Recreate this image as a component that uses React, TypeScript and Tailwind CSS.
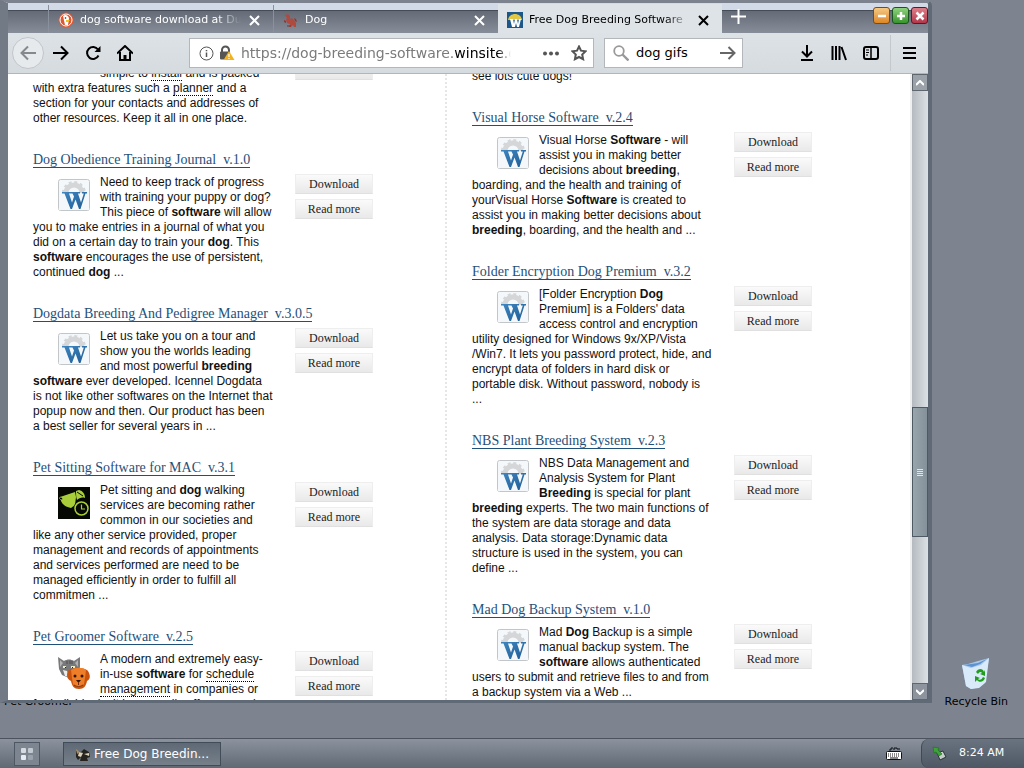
import type { ReactNode } from "react"

type Entry = {
  title: string
  icon: "win" | "pet" | "groom" | "none"
  body: ReactNode
}

const leftEntries: Entry[] = [
  {
    title: "",
    icon: "none",
    body: (
      <>
        <br />
        <br />
        simple to <Term>install</Term> and is packed with extra features such a <Term>planner</Term> and a section for
        your contacts and addresses of other resources. Keep it all in one place.
      </>
    ),
  },
  {
    title: "Dog Obedience Training Journal  v.1.0",
    icon: "win",
    body: (
      <>
        Need to keep track of progress with training your puppy or dog? This piece of <b>software</b> will allow you to
        make entries in a journal of what you did on a certain day to train your <b>dog</b>. This <b>software</b>{" "}
        encourages the use of persistent, continued <b>dog</b> ...
      </>
    ),
  },
  {
    title: "Dogdata Breeding And Pedigree Manager  v.3.0.5",
    icon: "win",
    body: (
      <>
        Let us take you on a tour and show you the worlds leading and most powerful <b>breeding software</b> ever
        developed. Icennel Dogdata is not like other softwares on the Internet that popup now and then. Our product has
        been a best seller for several years in ...
      </>
    ),
  },
  {
    title: "Pet Sitting Software for MAC  v.3.1",
    icon: "pet",
    body: (
      <>
        Pet sitting and <b>dog</b> walking services are becoming rather common in our societies and like any other
        service provided, proper management and records of appointments and services performed are need to be managed
        efficiently in order to fulfill all commitmen ...
      </>
    ),
  },
  {
    title: "Pet Groomer Software  v.2.5",
    icon: "groom",
    body: (
      <>
        A modern and extremely easy-in-use <b>software</b> for <Term>schedule management</Term> in companies or
        <br />
        for individuals, it is generally offers a number of
      </>
    ),
  },
]

const rightEntries: Entry[] = [
  {
    title: "",
    icon: "none",
    body: (
      <>
        <br />
        <br />
        <br />
        see lots cute dogs!
      </>
    ),
  },
  {
    title: "Visual Horse Software  v.2.4",
    icon: "win",
    body: (
      <>
        Visual Horse <b>Software</b> - will assist you in making better decisions about <b>breeding</b>, boarding, and
        the health and training of yourVisual Horse <b>Software</b> is created to assist you in making better decisions
        about <b>breeding</b>, boarding, and the health and ...
      </>
    ),
  },
  {
    title: "Folder Encryption Dog Premium  v.3.2",
    icon: "win",
    body: (
      <>
        [Folder Encryption <b>Dog</b> Premium] is a Folders' data access control and encryption utility designed for
        Windows 9x/XP/Vista
        <br />
        /Win7. It lets you password protect, hide, and encrypt data of folders in hard disk or portable disk. Without
        password, nobody is
        <br />
        ...
      </>
    ),
  },
  {
    title: "NBS Plant Breeding System  v.2.3",
    icon: "win",
    body: (
      <>
        NBS Data Management and Analysis System for Plant <b>Breeding</b> is special for plant <b>breeding</b> experts.
        The two main functions of the system are data storage and data analysis. Data storage:Dynamic data structure is
        used in the system, you can define ...
      </>
    ),
  },
  {
    title: "Mad Dog Backup System  v.1.0",
    icon: "win",
    body: (
      <>
        Mad <b>Dog</b> Backup is a simple manual backup system. The <b>software</b> allows authenticated users to submit
        and retrieve files to and from a backup system via a Web ...
      </>
    ),
  },
]

function Term({ children }: { children: ReactNode }) {
  return <span className="border-b border-dotted border-black">{children}</span>
}

function WinIcon() {
  return (
    <svg width="32" height="32" viewBox="0 0 32 32">
      <defs>
        <linearGradient id="w" x1="0" y1="0" x2="1" y2="1">
          <stop offset="0" stopColor="#3f86c0" />
          <stop offset="1" stopColor="#1f5c94" />
        </linearGradient>
      </defs>
      <rect x="0.5" y="0.5" width="31" height="31" rx="2" fill="#f5f8fa" stroke="#c3c6c9" />
      <circle cx="16" cy="14" r="8" fill="none" stroke="#d4d6d8" strokeWidth="5" />
      <circle cx="16" cy="14" r="11" fill="none" stroke="#d4d6d8" strokeWidth="2" strokeDasharray="3 2.76" />
      <rect x="1" y="14" width="30" height="17" fill="#f5f8fa" />
      <path
        d="M4 13h9v1.500h-2l3 9 2-6-1.500-3h-2V13H22v1.500h-2l3 9 2.800-9H24V13h5v1.500h-1.500L22.500 30h-1.500l-3.500-9.500L14 30h-1.500L6.500 14.500H4z"
        fill="url(#w)"
      />
    </svg>
  )
}

function PetIcon() {
  return (
    <svg width="32" height="32" viewBox="0 0 32 32">
      <rect width="32" height="32" fill="#050803" />
      <path d="M2 10 11 7l6-2 1 5-1 8-4 3c-5-1-8-3-10-7z" fill="#a8cf3a" />
      <path d="m18 4 3-1c4 1 6 4 6 8-3-1-6 0-8 2-1-3-1-6-1-9z" fill="#a8cf3a" />
      <path d="m19 5 6 4" stroke="#050803" fill="none" />
      <path d="m1 11 2-1 2 2-2 1z" fill="#050803" stroke="#a8cf3a" strokeWidth="0.600" />
      <circle cx="23.500" cy="21.500" r="8" fill="#050803" />
      <circle cx="23.500" cy="21.500" r="6.500" fill="none" stroke="#a8cf3a" strokeWidth="1.500" />
      <path d="M23.500 17.500v4.500H27" fill="none" stroke="#a8cf3a" strokeWidth="1.200" />
    </svg>
  )
}

function GroomIcon() {
  return (
    <svg width="32" height="34" viewBox="0 0 32 34">
      <path d="m0 1 6 4c3-2 7-2 10 0l6-4v10l-2 8-9 3-7-3-3-6z" fill="#77797b" />
      <path d="m2 4 3 3-3 4zM20 4l-3 3 3 4z" fill="#b5b0b1" />
      <path d="m5 14 4 1 3 6-5-1z" fill="#ececea" />
      <path d="M9 5v3M12 4.500V8M14 5v3" stroke="#4d4f52" />
      <path d="M5 11h3M13 11h4" stroke="#e9edc8" strokeWidth="2" />
      <path d="M7 11.500h1M14 11.500h1" stroke="#222" />
      <path d="M10 15c3-4 17-4 20 0 3 5 2 9-1 10-1 5-3 8-8 8s-7-3-8-8c-4-2-5-6-3-10z" fill="#c9530d" />
      <path d="M13 14c4-3 12-3 15 0l-1 8-1 6c-3 4-8 4-11 0l-1-6z" fill="#ee7f28" />
      <circle cx="17" cy="20" r="1.500" fill="#301406" />
      <circle cx="24" cy="20" r="1.500" fill="#301406" />
      <path d="M18 24h5l-2.500 3z" fill="#301406" />
      <path d="M20.500 26v3M16 29c3 2 6 2 9 0" stroke="#7a2c08" fill="none" />
    </svg>
  )
}

function PageButton({ children }: { children: ReactNode }) {
  return (
    <button className="h-5 w-[78px] border border-[#eeeeee] border-b-[#e0e0e0] bg-linear-to-b from-[#fafafa] to-[#e9e9e9] font-['Liberation_Serif',serif] text-[12px] leading-[18px] text-[#222]">
      {children}
    </button>
  )
}

function Listing({ title, icon, body }: Entry) {
  return (
    <article className="mb-[19px]">
      <h2 className="h-5 text-[14px] leading-5 whitespace-pre text-[#1f5079]">
        {title && (
          <a href="#" className="inline-block border-b border-[#1f5079] font-['Liberation_Serif',serif] leading-[15px]">
            {title}
          </a>
        )}
      </h2>
      <div className="flex gap-[22px] pt-[5px]">
        <p className="w-60 pt-px pb-1 text-[12px] leading-[15px]">
          <span className="float-left block h-[45px] w-[67px] pt-1 pl-[25px]">
            {icon === "win" && <WinIcon />}
            {icon === "pet" && <PetIcon />}
            {icon === "groom" && <GroomIcon />}
          </span>
          {body}
        </p>
        <div className="flex flex-col gap-[5px]">
          <PageButton>Download</PageButton>
          <PageButton>Read more</PageButton>
        </div>
      </div>
    </article>
  )
}

function Cross() {
  return (
    <svg width="11" height="11" viewBox="0 0 11 11" fill="none" stroke="currentColor" strokeWidth="2">
      <path d="m1 1 9 9M10 1 1 10" />
    </svg>
  )
}

function DuckIcon() {
  return (
    <svg width="16" height="16" viewBox="0 0 16 16">
      <circle cx="8" cy="8" r="7.500" fill="#de5833" />
      <circle cx="8" cy="8" r="6" fill="none" stroke="#fff" />
      <path d="M5 4c2-2 5-1 6 2l-1 7H7z" fill="#fff" />
      <path d="M8 8h4l-2 2H8z" fill="#f7c31b" />
      <circle cx="7.500" cy="6" r="0.800" fill="#223" />
    </svg>
  )
}

function DogIcon() {
  return (
    <svg width="16" height="16" viewBox="0 0 16 16">
      <path d="m2 3 3-1 2 2v3l2-1 3 3 1 2v4h-2l-1-2-2 2H6l1-3-3-1-1-3 1-2z" fill="#b04a3f" />
      <path d="m11 6 2 1 1 3-2-1zM1 8l2 1v2l-2-1z" fill="#8c3a33" />
      <path d="M4 14h4" stroke="#7b3530" />
    </svg>
  )
}

function SiteIcon() {
  return (
    <svg width="16" height="16" viewBox="0 0 16 16">
      <rect width="16" height="16" fill="#1d5689" />
      <path d="M1 8c1-8 13-8 14 0z" fill="#e1c743" />
      <path d="M3 7h3l1 5 1-5h2l1 5 1-5h2l-2 8h-2l-1-4-1 4H5z" fill="#fff" />
    </svg>
  )
}

function Tab({ icon, label, active }: { icon: ReactNode; label: string; active?: boolean }) {
  return (
    <div
      className={
        active
          ? "-mt-[7px] flex w-56 items-center bg-[#dee3e8] px-[9px] pt-[3px] text-black"
          : "-mt-[6px] flex w-[225px] items-center border-l border-[#8b919c] px-[9px] pt-[2px] text-white"
      }
    >
      {icon}
      <a href="#" className="ml-[6px] flex-1 overflow-hidden mask-r-from-85% text-[11px] leading-5 whitespace-nowrap">
        {label}
      </a>
      <button aria-label="Close tab" className="ml-2 pr-1">
        <Cross />
      </button>
    </div>
  )
}

function Tabs() {
  return (
    <div className="bg-[#d3dae7] pt-[7px]">
      <div className="flex h-[23px] border-t border-[#454c57] bg-linear-to-b from-[#646b76] to-[#878e99]">
        <div className="flex flex-1 pl-10">
          <Tab icon={<DuckIcon />} label="dog software download at DuckDuckGo" />
          <Tab icon={<DogIcon />} label="Dog" />
          <Tab active icon={<SiteIcon />} label="Free Dog Breeding Software" />
          <button aria-label="New tab" className="-mt-3 ml-2 px-px text-white">
            <svg width="15" height="15" viewBox="0 0 15 15" stroke="currentColor" strokeWidth="2">
              <path d="M7.500 0v15M0 7.500h15" />
            </svg>
          </button>
        </div>
        <div className="-mt-1 flex items-start gap-[2px]">
          <WindowButton label="Minimize" color="bg-linear-to-b from-[#f6c982] to-[#dc8620] border-[#7b4a12]">
            <path d="M4 8h8" />
          </WindowButton>
          <WindowButton label="Maximize" color="bg-linear-to-b from-[#8fd27c] to-[#36942c] border-[#1c5220]">
            <path d="M8 4v8M4 8h8" />
          </WindowButton>
          <WindowButton label="Close" color="bg-linear-to-b from-[#dc7f8b] to-[#b2364a] border-[#641525]">
            <path d="m4.500 4.500 7 7M11.500 4.500l-7 7" />
          </WindowButton>
        </div>
      </div>
    </div>
  )
}

function WindowButton({ label, color, children }: { label: string; color: string; children: ReactNode }) {
  return (
    <button
      aria-label={label}
      className={`flex size-[17px] items-center justify-center rounded-[3px] border ${color}`}
    >
      <svg width="16" height="16" viewBox="0 0 16 16" className="shrink-0 stroke-white" fill="none" strokeWidth="2.500">
        {children}
      </svg>
    </button>
  )
}

function Toolbar() {
  return (
    <div className="flex h-[41px] items-center border-b border-[#b1b6bb] bg-linear-to-b from-[#dde2e7] to-[#d6dbe0]">
      <button
        aria-label="Back"
        className="ml-1 flex size-8 items-center justify-center rounded-full border border-[#c2c6ca] bg-[#e7eaed] text-[#85888c]"
      >
        <svg width="16" height="16" viewBox="0 0 16 16" fill="none" stroke="currentColor" strokeWidth="2">
          <path d="M16 8H1.500M8 1.500 1.500 8 8 14.500" />
        </svg>
      </button>
      <button aria-label="Forward" className="ml-[9px]">
        <svg width="16" height="16" viewBox="0 0 16 16" fill="none" stroke="#000" strokeWidth="2">
          <path d="M0 8h14.500M8 1.500 14.500 8 8 14.500" />
        </svg>
      </button>
      <button aria-label="Reload" className="ml-4">
        <svg width="16" height="16" viewBox="0 0 16 16" fill="none" stroke="#000" strokeWidth="2">
          <path d="M13.500 10.500a6 6 0 1 1-.5-6" />
          <path d="M15.500 1v6h-6z" fill="#000" stroke="none" />
        </svg>
      </button>
      <button aria-label="Home" className="ml-4">
        <svg width="16" height="16" viewBox="0 0 16 16" fill="none" stroke="#000" strokeWidth="2">
          <path d="M0 8.500 8 1l8 7.500M3 7v8h10V7" />
          <path d="M6.500 15v-5h3v5z" fill="#000" stroke="none" />
        </svg>
      </button>

      <div className="mr-[10px] ml-14 flex h-[30px] min-w-0 flex-1 items-center border border-[#b3b7bc] bg-white px-[9px]">
        <svg width="15" height="15" viewBox="0 0 15 15" fill="none" stroke="#555" className="shrink-0">
          <circle cx="7.500" cy="7.500" r="6.500" />
          <path d="M7.500 6.500V11M7.500 4v1.300" strokeWidth="1.500" />
        </svg>
        <svg width="16" height="16" viewBox="0 0 16 16" className="ml-[5px] shrink-0">
          <path d="M3 7V5a3 3 0 0 1 7 0v2" fill="none" stroke="#555" strokeWidth="2" />
          <rect x="1" y="6.500" width="10" height="8" rx="1" fill="#555" />
          <path d="m10 6 5.500 9h-11z" fill="#f3b21b" />
          <path d="M10 9v3M10 13v1" stroke="#fff" strokeWidth="1.200" />
        </svg>
        <div className="ml-[6px] min-w-0 flex-1 overflow-hidden mask-r-from-95% text-[14px] whitespace-nowrap text-[#7b7b7b]">
          https://dog-breeding-software.<span className="text-black">winsite.com</span>
        </div>
        <button aria-label="Page actions" className="mr-3 ml-8 shrink-0">
          <svg width="16" height="5" viewBox="0 0 16 5" fill="#555">
            <circle cx="2" cy="2.500" r="2" />
            <circle cx="8" cy="2.500" r="2" />
            <circle cx="14" cy="2.500" r="2" />
          </svg>
        </button>
        <button aria-label="Bookmark this page" className="-mr-[3px] shrink-0">
          <svg width="16" height="16" viewBox="0 0 16 16" fill="none" stroke="#555" strokeWidth="2">
            <path d="m8 1.500 2 4.200 4.600.6-3.400 3.200.9 4.700L8 12l-4.100 2.200.9-4.700L1.400 6.300 6 5.700z" />
          </svg>
        </button>
      </div>

      <div className="flex h-[30px] w-[139px] shrink-0 items-center border border-[#b3b7bc] bg-white pr-[6px] pl-2">
        <svg width="16" height="16" viewBox="0 0 16 16" fill="none" stroke="#999" className="shrink-0">
          <circle cx="6" cy="6" r="4.800" strokeWidth="1.800" />
          <path d="m9.500 9.500 6 6" strokeWidth="2.400" />
        </svg>
        <input
          aria-label="Search"
          defaultValue="dog gifs"
          className="ml-[7px] min-w-0 flex-1 bg-transparent text-[13px] text-black outline-none"
        />
        <button aria-label="Go" className="shrink-0">
          <svg width="16" height="14" viewBox="0 0 16 14" fill="none" stroke="#666" strokeWidth="2">
            <path d="M0 7h14.500M8.500 1l6 6-6 6" />
          </svg>
        </button>
      </div>

      <div className="ml-14 flex shrink-0 items-center gap-4">
        <button aria-label="Downloads">
          <svg width="16" height="16" viewBox="0 0 16 16" fill="none" stroke="#000" strokeWidth="2">
            <path d="M8 0v11M3 6.500 8 11.500l5-5M2 15h12" />
          </svg>
        </button>
        <button aria-label="Library">
          <svg width="16" height="16" viewBox="0 0 16 16" fill="none" stroke="#000" strokeWidth="2">
            <path d="M1.500 1v14M5 1v14M8.500 1v14M10.500 2l4.500 13" />
          </svg>
        </button>
        <button aria-label="Sidebars">
          <svg width="16" height="16" viewBox="0 0 16 16" fill="none" stroke="#000" strokeWidth="2">
            <rect x="1" y="2" width="14" height="12" rx="2" />
            <path d="M8 2v12" strokeWidth="1.500" />
            <path d="M3 5h3M3 7.500h3M3 10h2" strokeWidth="1" />
          </svg>
        </button>
      </div>
      <div className="ml-[11px] flex h-9 shrink-0 items-center border-l border-[#c3c8cd] pr-3 pl-3">
        <button aria-label="Menu">
          <svg width="13" height="12" viewBox="0 0 13 12" stroke="#000" strokeWidth="2">
            <path d="M0 1h13M0 6h13M0 11h13" />
          </svg>
        </button>
      </div>
    </div>
  )
}

function Scrollbar() {
  return (
    <div className="flex w-4 shrink-0 flex-col bg-linear-to-r from-[#b4babf] to-[#dce1e6]">
      <button
        aria-label="Scroll up"
        className="flex h-[17px] items-center justify-center border border-[#60666e] bg-[#9ca2aa]"
      >
        <svg width="8" height="6" viewBox="0 0 8 6" fill="none" stroke="#fff" strokeWidth="2">
          <path d="m0 5 4-4 4 4" />
        </svg>
      </button>
      <div className="flex-[318]" />
      <div className="flex flex-[128] flex-col items-center justify-center gap-px border border-[#4d5963] bg-linear-to-r from-[#98a5ac] to-[#84919a]">
        <i className="h-px w-[6px] bg-[#dfe5e9]" />
        <i className="h-px w-[6px] bg-[#dfe5e9]" />
        <i className="h-px w-[6px] bg-[#dfe5e9]" />
        <i className="h-px w-[6px] bg-[#dfe5e9]" />
      </div>
      <div className="flex-[147]" />
      <button
        aria-label="Scroll down"
        className="flex h-[17px] items-center justify-center border border-[#60666e] bg-[#8d949d]"
      >
        <svg width="8" height="6" viewBox="0 0 8 6" fill="none" stroke="#fff" strokeWidth="2">
          <path d="m0 1 4 4 4-4" />
        </svg>
      </button>
    </div>
  )
}

function BrowserWindow() {
  return (
    <section className="relative mr-[92px] flex flex-1 flex-col overflow-hidden rounded-tr-md border-t-[3px] border-r-4 border-b-[3px] border-l-8 border-t-[#7c838e] border-r-[#5f6a76] border-b-[#5f6a76] border-l-[#727a85] bg-white">
      <Tabs />
      <Toolbar />
      <div className="flex min-h-0 flex-1">
        <main className="flex flex-1 overflow-hidden border-r-2 border-[#efefef] font-['Liberation_Sans',Arial,sans-serif] text-[#111]">
          <div className="-mt-16 w-[439px] shrink-0 border-r-2 border-dotted border-[#e6e6e6] pl-[25px]">
            {leftEntries.map((entry, i) => (
              <Listing key={i} {...entry} />
            ))}
          </div>
          <div className="-mt-[76px] pl-[25px]">
            {rightEntries.map((entry, i) => (
              <Listing key={i} {...entry} />
            ))}
          </div>
        </main>
        <Scrollbar />
      </div>
    </section>
  )
}

function Desktop() {
  return (
    <div className="relative flex flex-1 flex-col overflow-hidden pb-[35px]">
      {/* desktop shortcut, mostly hidden behind the browser window */}
      <a href="#" className="absolute bottom-7 left-1 text-[11px] leading-4 text-black">
        Pet Groomer
      </a>
      <BrowserWindow />
      <a href="#" className="absolute right-4 bottom-6 flex flex-col items-center text-[11px] text-black">
        <svg width="30" height="32" viewBox="0 0 30 32">
          <path d="m1 7 6-1 10-3 11-3-4 25-5 4-9 2-5-3z" fill="#a7c9ec" />
          <path d="m1 7 9 3 10-3 8-7-3 24-7 6-8 1-5-3z" fill="#d9eafa" />
          <path d="m3 7 8 2 8-3 7-5-9 4z" fill="#5d91cf" />
          <path
            d="M15 14c2-4 7-4 8 0l1-2v6l-5-2 2-1c-1-2-3-1-4 1zM24 20c-1 4-6 5-8 2l-2 2v-6l5 2-2 1c2 2 4 0 5-2z"
            fill="#219c1e"
          />
        </svg>
        <span className="leading-6">Recycle Bin</span>
      </a>
    </div>
  )
}

function Taskbar() {
  return (
    <footer className="flex h-[30px] shrink-0 border-t border-[#4c535e] bg-linear-to-b from-[#8c939e] to-[#5f6974] text-white">
      <button
        aria-label="Start"
        className="mt-[3px] ml-[14px] flex h-6 w-[26px] items-center justify-center border border-[#4e5865] bg-[#7c8590]"
      >
        <svg width="12" height="12" viewBox="0 0 12 12">
          <rect width="5" height="5" rx="1" fill="#d6dbe1" />
          <rect x="7" width="5" height="5" rx="1" fill="#c2c8d0" />
          <rect y="7" width="5" height="5" rx="1" fill="#e8ecf0" />
          <rect x="7" y="7" width="5" height="5" rx="1" fill="#9aa2ac" />
        </svg>
      </button>
      <button className="mt-[3px] ml-[23px] flex h-6 w-[158px] items-center gap-[3px] border border-[#414c59] bg-linear-to-b from-[#5f6975] to-[#75808b] pl-[11px] text-[12px]">
        <svg width="16" height="16" viewBox="0 0 16 16">
          <path d="m1 5 5 1 3-3 5 3 1 5-3 1 1 3H5l1-4-3 3-2-3z" fill="#26221e" />
          <path d="m4 6 4 1-2 4-3-1zM9 8l5-1v3z" fill="#d8d2bc" />
          <path d="m1 3 4 3-3 2z" fill="#a98961" />
        </svg>
        Free Dog Breedin...
      </button>
      <svg width="16" height="14" viewBox="0 0 16 14" className="mt-2 mr-[19px] ml-auto">
        <path d="M4 4V2h2V0M8 3V1h3v1h3" fill="none" stroke="#111" />
        <rect x="0.500" y="4.500" width="15" height="8" rx="1" fill="#fff" stroke="#111" />
        <path d="M2 7h12M2 9h12" stroke="#111" strokeDasharray="1 1" />
        <path d="M4 11h8" stroke="#111" />
      </svg>
      <div className="flex w-[103px] items-center rounded-l-lg border-l border-[#3f4a57] bg-linear-to-b from-[#6a7480] to-[#4d5864] pl-[10px] text-[11px]">
        <svg width="15" height="15" viewBox="0 0 15 15" className="mr-3">
          <path d="m5 7 6-2 3 6-6 3z" fill="#c5cdc9" stroke="#2b3338" />
          <path d="m1 1 6 1-1 2 4 4-3 2-3-4-2 1z" fill="#3da338" stroke="#1c6b1c" strokeWidth="0.600" />
        </svg>
        8:24 AM
      </div>
    </footer>
  )
}

export default function App() {
  return (
    <div className="flex h-screen flex-col overflow-hidden bg-[#7d8490] font-['DejaVu_Sans',Verdana,sans-serif]">
      <Desktop />
      <Taskbar />
    </div>
  )
}
